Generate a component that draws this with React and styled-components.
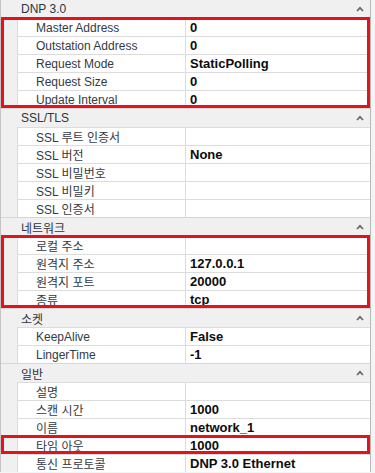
import styled, { createGlobalStyle } from 'styled-components';

const GlobalStyle = createGlobalStyle`
  html, body {
    margin: 0;
    padding: 0;
    background: #f4f4f4;
  }
  body {
    font-family: "Liberation Sans", "Noto Sans CJK KR", sans-serif;
    overflow: hidden;
  }
`;

const Grid = styled.div`
  width: 371px;
  margin-top: -1px;
  box-sizing: border-box;
  border-left: 1px solid #c4c4c4;
  border-right: 1px solid #b8b8b8;
  background: #f0f0f0;
`;

const CategoryHeader = styled.div`
  height: 19px;
  box-sizing: border-box;
  border-top: 1px solid #d6d6d6;
  display: flex;
  align-items: center;
  justify-content: space-between;
  padding: 0 6px 0 20px;
  font-size: 12px;
  color: #2e3440;
`;

const Caret = () => (
  <svg width="8" height="6" viewBox="0 0 8 6">
    <polyline points="1,5 4,1.8 7,5" fill="none" stroke="#6b6b6b" strokeWidth="1.8" />
  </svg>
);

const Highlight = styled.div`
  position: relative;

  &::after {
    content: '';
    position: absolute;
    top: -1px;
    left: 0;
    right: 0;
    bottom: 0;
    border: 3px solid #e3131d;
    pointer-events: none;
  }
`;

const Row = styled.div`
  margin-left: 16px;
  height: 18px;
  box-sizing: border-box;
  display: grid;
  grid-template-columns: 168px 1fr;
  border-top: 1px solid #dcdcdc;
  border-left: 1px solid #dcdcdc;
  background: #fff;
`;

const Name = styled.div`
  padding-left: 18px;
  border-right: 1px solid #dcdcdc;
  display: flex;
  align-items: center;
  font-size: 12px;
  color: #333a45;
  white-space: nowrap;
  overflow: hidden;
`;

const Value = styled.div`
  padding-left: 4px;
  display: flex;
  align-items: center;
  font-size: 13px;
  font-weight: bold;
  color: #0c0c0c;
  white-space: nowrap;
  overflow: hidden;
`;

const categories = [
  {
    title: 'DNP 3.0',
    items: [
      ['Master Address', '0', true],
      ['Outstation Address', '0', true],
      ['Request Mode', 'StaticPolling', true],
      ['Request Size', '0', true],
      ['Update Interval', '0', true],
    ],
  },
  {
    title: 'SSL/TLS',
    items: [
      ['SSL 루트 인증서', ''],
      ['SSL 버전', 'None'],
      ['SSL 비밀번호', ''],
      ['SSL 비밀키', ''],
      ['SSL 인증서', ''],
    ],
  },
  {
    title: '네트워크',
    items: [
      ['로컬 주소', '', true],
      ['원격지 주소', '127.0.0.1', true],
      ['원격지 포트', '20000', true],
      ['종류', 'tcp', true],
    ],
  },
  {
    title: '소켓',
    items: [
      ['KeepAlive', 'False'],
      ['LingerTime', '-1'],
    ],
  },
  {
    title: '일반',
    items: [
      ['설명', ''],
      ['스캔 시간', '1000'],
      ['이름', 'network_1'],
      ['타임 아웃', '1000', true],
      ['통신 프로토콜', 'DNP 3.0 Ethernet'],
    ],
  },
];

// group consecutive highlighted rows so one red box wraps them
const groupItems = (items) => {
  const groups = [];
  items.forEach((item) => {
    const last = groups[groups.length - 1];
    const hl = !!item[2];
    if (last && last.hl === hl) last.rows.push(item);
    else groups.push({ hl, rows: [item] });
  });
  return groups;
};

const PropRow = ({ name, value }) => (
  <Row>
    <Name>{name}</Name>
    <Value>{value}</Value>
  </Row>
);

export default function App() {
  return (
    <>
      <GlobalStyle />
      <Grid>
        {categories.map((cat) => (
          <div key={cat.title}>
            <CategoryHeader>
              <span>{cat.title}</span>
              <Caret />
            </CategoryHeader>
            {groupItems(cat.items).map((g, i) => {
              const rows = g.rows.map(([n, v]) => <PropRow key={n} name={n} value={v} />);
              return g.hl ? <Highlight key={i}>{rows}</Highlight> : <div key={i}>{rows}</div>;
            })}
          </div>
        ))}
      </Grid>
    </>
  );
}
